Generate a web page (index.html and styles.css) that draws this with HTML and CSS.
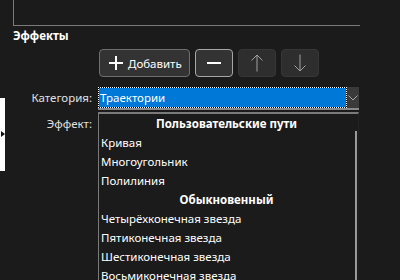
FILE: index.html
```html
<!DOCTYPE html>
<html lang="ru">
<head>
<meta charset="utf-8">
<link rel="stylesheet" href="styles.css">
</head>
<body>
<div class="page">
  <div class="top-box"></div>
  <div class="section-title">Эффекты</div>
  <div class="toolbar">
    <button class="btn btn-add">
      <svg class="ico" width="14" height="14" viewBox="0 0 14 14"><path d="M7 0v14M0 7h14" stroke="#fff" stroke-width="2" fill="none"/></svg>
      <span>Добавить</span>
    </button>
    <button class="btn btn-icon btn-focus">
      <svg width="14" height="2" viewBox="0 0 14 2"><path d="M0 1h14" stroke="#fff" stroke-width="2"/></svg>
    </button>
    <button class="btn btn-icon btn-disabled">
      <svg width="14" height="18" viewBox="0 0 14 18"><path d="M7 17.5V1M1.5 6.5L7 1l5.5 5.5" stroke="#a0a0a0" stroke-width="1" fill="none"/></svg>
    </button>
    <button class="btn btn-icon btn-disabled">
      <svg width="14" height="18" viewBox="0 0 14 18"><path d="M7 0.5V17M1.5 11.5L7 17l5.5-5.5" stroke="#a0a0a0" stroke-width="1" fill="none"/></svg>
    </button>
  </div>
  <div class="form-row cat-row">
    <div class="label">Категория:</div>
    <div class="combo">
      <div class="combo-value">Траектории</div>
      <div class="combo-btn">
        <svg width="10" height="6" viewBox="0 0 10 6"><path d="M0.5 0.5L5 5l4.5-4.5" stroke="#a8a8a8" stroke-width="1" fill="none"/></svg>
      </div>
    </div>
  </div>
  <div class="form-row eff-row">
    <div class="label">Эффект:</div>
  </div>

  <div class="side-panel"><span class="side-arrow"></span></div>

  <div class="dropdown">
    <div class="item header">Пользовательские пути</div>
    <div class="item">Кривая</div>
    <div class="item">Многоугольник</div>
    <div class="item">Полилиния</div>
    <div class="item header">Обыкновенный</div>
    <div class="item">Четырёхконечная звезда</div>
    <div class="item">Пятиконечная звезда</div>
    <div class="item">Шестиконечная звезда</div>
    <div class="item">Восьмиконечная звезда</div>
    <div class="scrollbar"></div>
  </div>
</div>
</body>
</html>
```
FILE: styles.css
```css
html, body {
  margin: 0;
  padding: 0;
  background: #1b1b1b;
  width: 400px;
  height: 280px;
  overflow: hidden;
}
body {
  font-family: "Noto Sans", "Open Sans", sans-serif;
  font-size: 11.5px;
  color: #fff;
}
.page {
  position: relative;
  width: 400px;
  height: 280px;
  overflow: hidden;
}
.top-box {
  margin-left: 13px;
  width: 346px;
  height: 25px;
  border-left: 1px solid #7a7a7a;
  border-bottom: 1px solid #7a7a7a;
  box-sizing: content-box;
}
.section-title {
  margin-top: 2px;
  padding-left: 13px;
  font-weight: bold;
  line-height: 16px;
  height: 16px;
}
.toolbar {
  display: flex;
  gap: 5px;
  margin-top: 5px;
  margin-left: 99px;
}
.btn {
  height: 28px;
  border-radius: 4px;
  border: 1px solid #6e6e6e;
  background: #333;
  color: #fff;
  font-family: inherit;
  font-size: 11.5px;
  padding: 0;
  display: flex;
  align-items: center;
  justify-content: center;
  box-sizing: border-box;
}
.btn-add {
  width: 91px;
  justify-content: flex-start;
  padding-left: 9px;
  gap: 5px;
}
.btn-icon {
  width: 38px;
}
.btn-focus {
  border-color: #a6a6a6;
}
.btn-disabled {
  background: #2e2e2e;
  border-color: #363636;
}
.form-row {
  display: flex;
  align-items: center;
}
.label {
  width: 92px;
  text-align: right;
  color: #e0e0e0;
  margin-right: 6px;
  line-height: 18px;
}
.cat-row {
  margin-top: 10px;
  height: 23px;
  align-items: flex-start;
}
.cat-row .label {
  padding-top: 2px;
}
.combo {
  display: flex;
  width: 261px;
  height: 23px;
  border-bottom: 2px solid #888;
  box-sizing: border-box;
}
.combo-value {
  flex: 1;
  height: 21px;
  box-sizing: border-box;
  border: 1px dotted #fff;
  background: linear-gradient(#0078d7, #0078d7) padding-box, linear-gradient(#000, #000) border-box;
  line-height: 19px;
  padding-left: 1px;
  color: #fff;
}
.combo-btn {
  width: 12px;
  height: 21px;
  background: #3a3a3a;
  display: flex;
  align-items: center;
  justify-content: center;
}
.eff-row {
  margin-top: 5px;
}
.dropdown {
  position: absolute;
  left: 98px;
  top: 112px;
  width: 261px;
  bottom: 0;
  box-sizing: border-box;
  border-top: 2px solid #7a7a7a;
  border-left: 1px solid #7a7a7a;
  border-right: 1px solid #222;
  background: #1b1b1b;
  overflow: hidden;
}
.item {
  height: 19px;
  line-height: 19px;
  padding-left: 2px;
  padding-right: 6px;
  white-space: nowrap;
  color: #fff;
}
.item.header {
  font-weight: bold;
  text-align: center;
}
.scrollbar {
  position: absolute;
  left: 256px;
  top: 17px;
  width: 2px;
  bottom: 0;
  background: #9a9a9a;
}
.side-panel {
  position: absolute;
  left: 0;
  top: 98px;
  width: 5px;
  height: 73px;
  background: #fff;
}
.side-arrow {
  position: absolute;
  left: 1px;
  top: 33px;
  width: 0;
  height: 0;
  border-top: 3px solid transparent;
  border-bottom: 3px solid transparent;
  border-left: 4px solid #111;
}
```
